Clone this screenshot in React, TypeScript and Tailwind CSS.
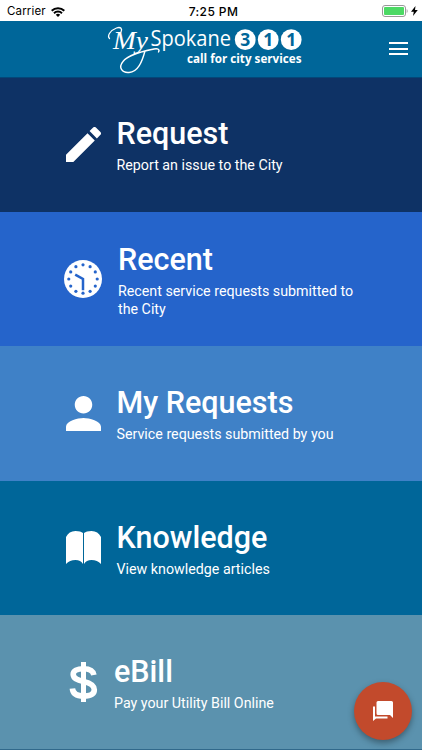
import type { ReactNode } from "react";

const dots = Array.from({ length: 12 }, (_, i) => {
  const a = (i * Math.PI) / 6;
  return { x: 19 + 14.2 * Math.sin(a), y: 19 - 14.2 * Math.cos(a) };
});

function Pencil() {
  return (
    <svg viewBox="3 3 18 18" className="h-[35px] w-[35px] fill-white">
      <path d="M3 17.25V21h3.75L17.81 9.94l-3.75-3.75L3 17.25zM20.71 7.04a1 1 0 0 0 0-1.41l-2.34-2.34a1 1 0 0 0-1.41 0l-1.83 1.83 3.75 3.75 1.83-1.83z" />
    </svg>
  );
}

function Clock() {
  return (
    <svg viewBox="0 0 38 38" className="h-[38px] w-[38px]">
      <circle cx="19" cy="19" r="19" fill="#fff" />
      {dots.map((d, i) => (
        <circle key={i} cx={d.x} cy={d.y} r="1.6" fill="#2564cb" />
      ))}
      <path d="M11.2 14.6 19 19v11.2" fill="none" stroke="#2564cb" strokeWidth="2.5" />
    </svg>
  );
}

function Person() {
  return (
    <svg viewBox="4 4 16 16" className="h-[35px] w-[35px] fill-white">
      <path d="M12 12c2.21 0 4-1.79 4-4s-1.790-4-4-4-4 1.790-4 4 1.790 4 4 4zm0 2c-2.670 0-8 1.340-8 4v2h16v-2c0-2.660-5.330-4-8-4z" />
    </svg>
  );
}

function Book() {
  return (
    <svg viewBox="0 0 35 34" className="h-[34px] w-[35px] fill-white">
      <path d="M0 6C2 2 5 0 9.500 0c3.500 0 6 .7 7.500 2v31c-1.500-2.700-4-4-7.500-4-4 0-7 1.300-9.500 4zM35 6c-2-4-5-6-9.500-6C22 0 19.500.7 18 2v31c1.500-2.700 4-4 7.500-4 4 0 7 1.300 9.500 4z" />
    </svg>
  );
}

function Dollar() {
  return (
    <svg viewBox="0 0 29 40" className="h-10 w-[29px]">
      <path d="M24.900 13C24.200 8.500 20.500 6.700 14.500 6.700 8.200 6.700 4.200 8.600 4.200 12.300c0 4.200 4 5.700 10.300 7.100 7 1.600 10.800 3.600 10.800 8.300 0 4.500-4.400 6.300-10.800 6.300-6.600 0-10.700-2.500-11.100-7.500" fill="none" stroke="#fff" strokeWidth="5.600" />
      <path d="M12 0h5v40h-5z" fill="#fff" />
    </svg>
  );
}

function Tile({ icon, title, text, className }: { icon: ReactNode; title: string; text: string; className: string }) {
  return (
    <button className={`flex h-[134.4px] w-full shrink-0 items-center text-left text-white ${className}`}>
      {icon}
      <span className="flex w-[252px] flex-col gap-[5px] pt-[2px]">
        <span className="text-[30.500px] leading-9 font-medium">{title}</span>
        <span className="text-[14.250px] leading-[17.400px]">{text}</span>
      </span>
    </button>
  );
}

function Logo() {
  return (
    <svg viewBox="0 0 200 56" className="h-14 w-[200px] overflow-visible" fill="#fff">
      <g fill="none" stroke="#fff" strokeLinecap="round">
        <path d="M5.500 17.500C3 15 6 9.500 12.500 7c4.500-1.600 6 1 4.500 4" strokeWidth="1.300" />
        <path d="M41 30C38 41 34 51 25 51.500c-7 .6-11-5-6-11 5.500-7.500 22-10.500 31-12.500 4-.8 6 .5 4.500 3" strokeWidth="1.400" />
      </g>
      <text x="9" y="28" className="font-['Liberation_Serif',serif] italic" fontSize="25" textLength="35" lengthAdjust="spacingAndGlyphs">My</text>
      <g className="font-['Open_Sans',sans-serif]">
        <text x="46.500" y="25.300" fontSize="22" fontWeight="500" textLength="80.500" lengthAdjust="spacingAndGlyphs">Spokane</text>
        <text x="83" y="42" fontSize="13" fontWeight="700" textLength="114.500" lengthAdjust="spacingAndGlyphs">call for city services</text>
        {["3", "1", "1"].map((n, i) => (
          <g key={i}>
            <circle cx={141.200 + i * 23} cy="18.700" r="10.400" />
            <text x={141.200 + i * 23} y="25" fontSize="17.500" fontWeight="700" textAnchor="middle" fill="#006699">{n}</text>
          </g>
        ))}
      </g>
    </svg>
  );
}

export default function App() {
  return (
    <main className="relative h-[750px] w-[422px] overflow-hidden bg-[#31698b] font-[Roboto,sans-serif]">
      <div className="grid h-[21px] grid-cols-3 items-center bg-white px-[7px] font-[Inter,sans-serif] text-[11.500px] text-black">
        <div className="flex items-center gap-[5px] pt-[2px]">
          <span className="tracking-[0.15px]">Carrier</span>
          <svg viewBox="0 0 14 10" className="h-[10px] w-[14px]" fill="none" stroke="#000" strokeWidth="2">
            <path d="M.7 3.800a9 9 0 0 1 12.600 0M3 6.200a5.700 5.700 0 0 1 8 0" />
            <path d="m7 10-2.200-2.200a3.100 3.100 0 0 1 4.400 0z" fill="#000" stroke="none" />
          </svg>
        </div>
        <span className="pt-[2px] pl-[5px] text-center text-[12px] font-medium tracking-[0.4px]">7:25 PM</span>
        <div className="-mr-[3px] flex items-center justify-end gap-[3px]">
          <svg viewBox="0 0 26 12" className="h-3 w-[26px]">
            <rect x=".5" y=".5" width="23" height="11" rx="2.500" fill="none" stroke="#999" />
            <rect x="2" y="2" width="20" height="8" rx="1" fill="#4cd964" />
            <path d="M24.700 4c1.200.6 1.200 3.400 0 4z" fill="#999" />
          </svg>
          <svg viewBox="0 0 7 10" className="h-[10px] w-[7px]">
            <path d="M4.500 0 0 5.700h2.800L2 10l4.800-6H4z" />
          </svg>
        </div>
      </div>
      <header className="flex h-[56.500px] items-center justify-between border-b border-[#034778] bg-[#006699] pr-[14px] pl-[104px]">
        <Logo />
        <button aria-label="Menu" className="flex w-[19px] flex-col gap-[3.500px]">
          <span className="h-[2px] bg-white" />
          <span className="h-[2px] bg-white" />
          <span className="h-[2px] bg-white" />
        </button>
      </header>
      <div className="flex flex-col">
        <Tile icon={<Pencil />} title="Request" text="Report an issue to the City" className="gap-4 bg-[#0e3265] pl-[65.500px]" />
        <Tile icon={<Clock />} title="Recent" text="Recent service requests submitted to the City" className="gap-4 bg-[#2564cb] pl-16" />
        <Tile icon={<Person />} title="My Requests" text="Service requests submitted by you" className="gap-4 bg-[#3f81c7] pl-[65.500px]" />
        <Tile icon={<Book />} title="Knowledge" text="View knowledge articles" className="gap-4 bg-[#006699] pl-[65.500px]" />
        <Tile icon={<Dollar />} title="eBill" text="Pay your Utility Bill Online" className="gap-4 bg-[#5b92ae] pl-[69px]" />
      </div>
      <button aria-label="Chat" className="absolute top-[682px] left-[354px] flex h-[58px] w-[58px] items-center justify-center rounded-full bg-[#c24a2c] shadow-[0_3px_6px_rgba(0,0,0,0.35)]">
        <svg viewBox="0 0 20 20" className="h-5 w-5 fill-white">
          <path d="M5 0h13.500A1.500 1.500 0 0 1 20 1.500V17l-3-3H5a1.500 1.500 0 0 1-1.500-1.500v-11A1.500 1.500 0 0 1 5 0z" />
          <path d="M0 5.500h2v10h12.500v2H3L0 20z" />
        </svg>
      </button>
    </main>
  );
}
